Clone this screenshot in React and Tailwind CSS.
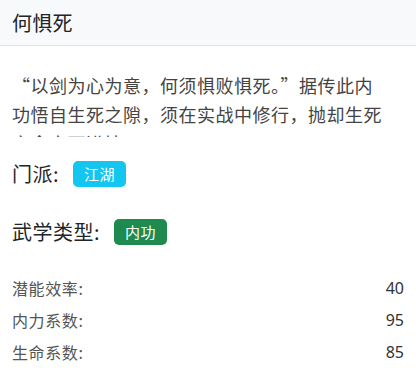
function Badge({ children, color }) {
  return (
    <span className={`inline-flex h-[26px] items-center rounded-[5px] px-[11px] text-[15px] tracking-[0.5px] text-white ${color}`}>
      {children}
    </span>
  )
}

function StatRow({ label, value }) {
  return (
    <div className="flex h-[32px] items-center justify-between">
      <span className="text-[16px] tracking-[0.6px] text-[#555]">{label}</span>
      <span className="font-['Noto_Sans',sans-serif] text-[16px] text-[#333]">{value}</span>
    </div>
  )
}

export default function App() {
  const stats = [
    { label: '潜能效率:', value: 40 },
    { label: '内力系数:', value: 95 },
    { label: '生命系数:', value: 85 }
  ]

  return (
    <div className="h-[373px] w-[416px] overflow-hidden bg-white font-['Noto_Sans_CJK_SC',sans-serif]">
      {/* Header */}
      <div className="flex h-[46px] items-center border-b border-[#dee2e6] bg-[#f8f9fa] px-3">
        <h1 className="text-[20px] leading-none tracking-[0.3px] text-[#212529]">何惧死</h1>
      </div>

      <div className="px-3">
        {/* Description, clipped */}
        <div className="mt-[25px] h-[66px] w-[378px] overflow-hidden text-[18px] leading-[29px] tracking-[0.5px] text-[#444]">
          “以剑为心为意，何须惧败惧死。”据传此内功悟自生死之隙，须在实战中修行，抛却生死之念方可进境。
        </div>

        <div className="mt-[24px] flex items-center gap-[14px]">
          <span className="text-[20px] leading-[26px] tracking-[0.5px] text-[#212529]">门派:</span>
          <Badge color="bg-[#13c6ef]">江湖</Badge>
        </div>

        <div className="mt-[32px] flex items-center gap-[14px]">
          <span className="text-[20px] leading-[26px] tracking-[0.5px] text-[#212529]">武学类型:</span>
          <Badge color="bg-[#1f8a50]">内功</Badge>
        </div>

        <div className="mt-[27px]">
          {stats.map((s) => (
            <StatRow key={s.label} label={s.label} value={s.value} />
          ))}
        </div>
      </div>
    </div>
  )
}
